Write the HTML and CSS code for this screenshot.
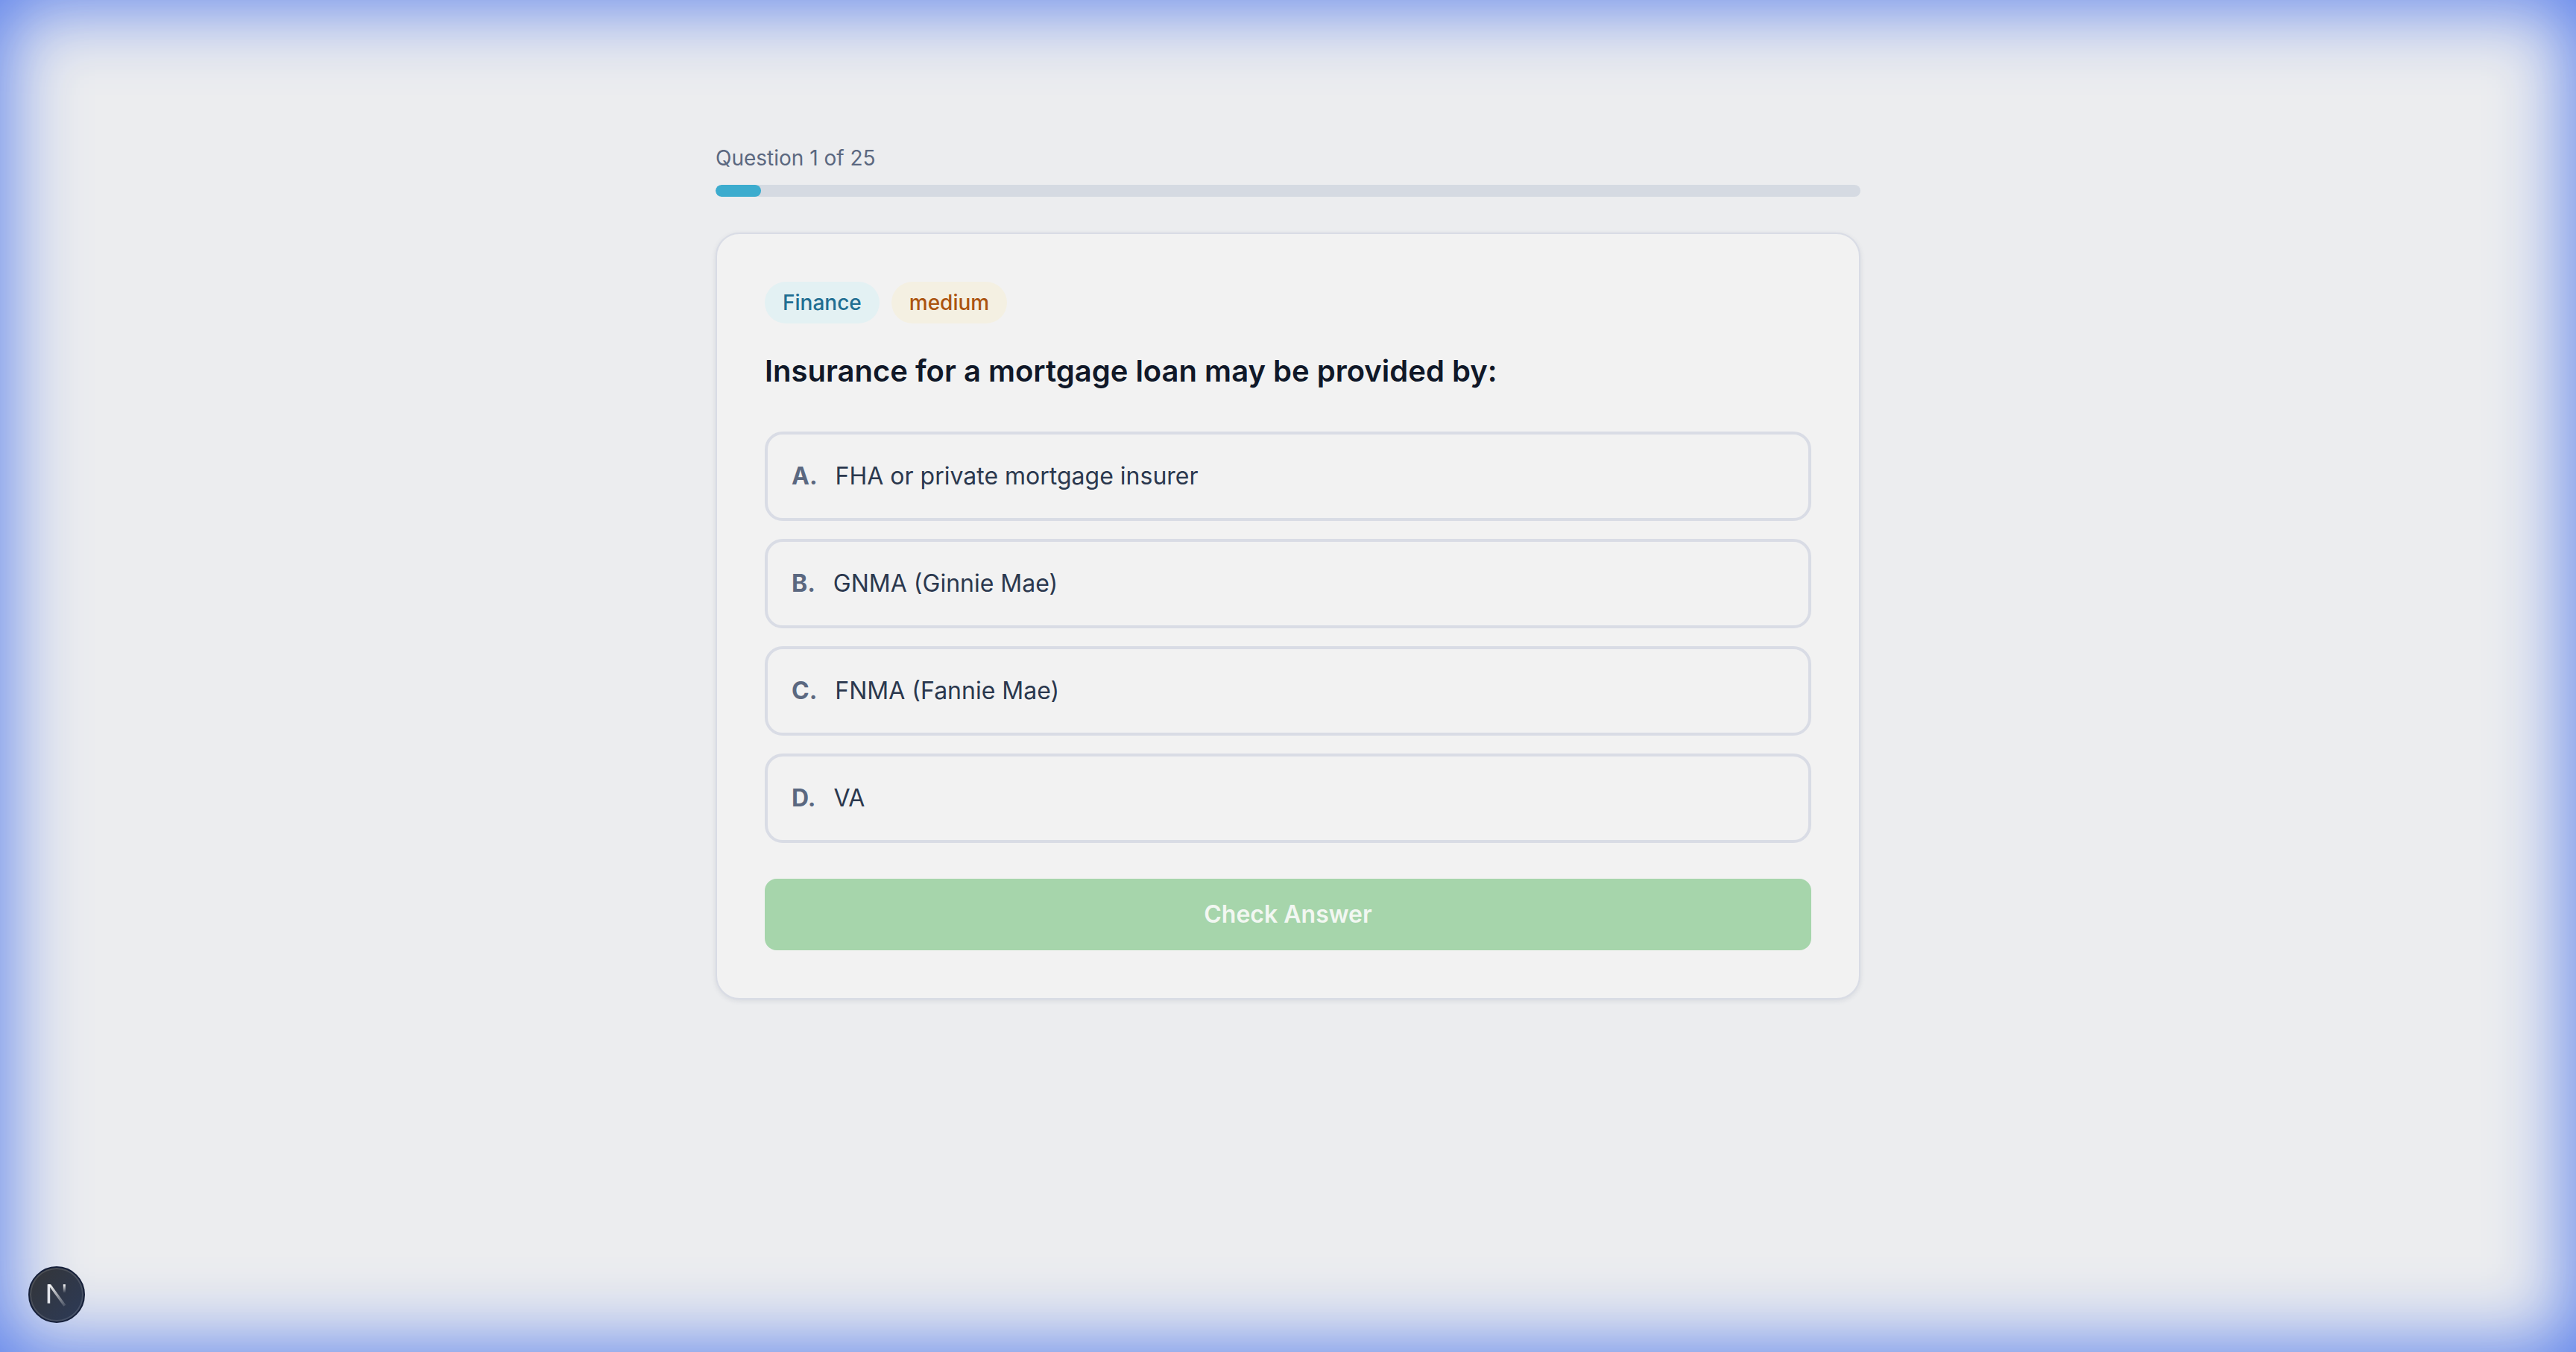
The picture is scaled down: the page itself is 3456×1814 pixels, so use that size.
FILE: index.html
```html
<!DOCTYPE html>
<html lang="en">

<head>
  <meta charset="UTF-8" />
  <title>Quiz</title>
  <link rel="stylesheet" href="styles.css">
</head>

<body>
  <main class="quiz">
    <div class="progress-label">Question 1 of 25</div>
    <div class="progress-track">
      <div class="progress-fill"></div>
    </div>

    <section class="card">
      <div class="tags">
        <span class="tag tag-category">Finance</span>
        <span class="tag tag-level">medium</span>
      </div>
      <h2 class="question">Insurance for a mortgage loan may be provided by:</h2>

      <div class="options">
        <button class="option"><span class="option-key">A.</span>FHA or private mortgage insurer</button>
        <button class="option"><span class="option-key">B.</span>GNMA (Ginnie Mae)</button>
        <button class="option"><span class="option-key">C.</span>FNMA (Fannie Mae)</button>
        <button class="option"><span class="option-key">D.</span>VA</button>
      </div>

      <button class="check" disabled>Check Answer</button>
    </section>
  </main>

  <!-- blue glow round the window -->
  <div class="glow"></div>

  <!-- dev tools badge -->
  <div class="dev-badge">
    <svg viewBox="0 0 32 32" width="44" height="44" fill="none">
      <defs>
        <linearGradient id="fade-stem" x1="0" y1="0" x2="0" y2="1">
          <stop offset="0" stop-color="#fff" />
          <stop offset="0.6" stop-color="#fff" stop-opacity="0" />
        </linearGradient>
        <linearGradient id="fade-diag" x1="0" y1="0" x2="1" y2="1">
          <stop offset="0" stop-color="#fff" />
          <stop offset="1" stop-color="#fff" stop-opacity="0.1" />
        </linearGradient>
      </defs>
      <path d="M7 6h2.6v18.5H7z" fill="#e4e6ec" />
      <path d="M7.5 6h2.8L25 26l-2.2 1.4z" fill="url(#fade-diag)" />
      <rect x="22.4" y="6" width="2.2" height="14" fill="url(#fade-stem)" />
    </svg>
  </div>
</body>

</html>
```

FILE: styles.css
```css
* {
  box-sizing: border-box;
}

body {
  margin: 0;
  min-height: 1814px;
  background: #ecedef;
  color: #1f2937;
  font-family: Inter, 'Liberation Sans', sans-serif;
  overflow: hidden;
}

.quiz {
  width: 1536px;
  margin: 0 auto;
  padding-top: 192px;
}

.progress-label {
  font-size: 28px;
  line-height: 40px;
  color: #5b6880;
  margin-bottom: 16px;
}

.progress-track {
  height: 16px;
  background: #d5dae2;
  border-radius: 8px;
  overflow: hidden;
}

.progress-fill {
  width: 4%;
  height: 100%;
  background: #3cacce;
  border-radius: 8px;
}

.card {
  margin-top: 48px;
  padding: 64px;
  background: #f2f2f2;
  border: 2px solid #d9dce5;
  border-radius: 32px;
  box-shadow: 0 2px 6px rgba(80, 90, 120, 0.14);
}

.tags {
  display: flex;
  gap: 16px;
}

.tag {
  padding: 8px 24px;
  font-size: 28px;
  line-height: 40px;
  font-weight: 500;
  border-radius: 28px;
}

.tag-category {
  background: #e3f1f3;
  color: #216e92;
}

.tag-level {
  background: #f4f0e2;
  color: #ab5410;
}

.question {
  margin: 36px 0 53px;
  font-size: 40px;
  line-height: 56px;
  font-weight: 600;
  color: #101828;
}

.options {
  display: flex;
  flex-direction: column;
  gap: 24px;
}

.option {
  display: block;
  width: 100%;
  height: 120px;
  padding: 0 32px 2px;
  background: transparent;
  border: 4px solid #d9dce5;
  border-radius: 24px;
  font-family: inherit;
  font-size: 32px;
  color: #2b384e;
  text-align: left;
}

.option-key {
  margin-right: 24px;
  font-weight: 700;
  color: #5b6880;
}

.check {
  display: block;
  width: 100%;
  height: 96px;
  margin-top: 48px;
  padding-bottom: 2px;
  background: #a6d5ab;
  border: none;
  border-radius: 16px;
  font-family: inherit;
  font-size: 32px;
  font-weight: 600;
  color: #f2f7f2;
}

.glow {
  position: fixed;
  top: 0;
  left: 0;
  width: 100%;
  height: 100%;
  pointer-events: none;
  box-shadow: inset 0 0 100px 8px rgba(80, 120, 235, 0.95);
}

.dev-badge {
  position: fixed;
  left: 38px;
  bottom: 39px;
  width: 76px;
  height: 76px;
  display: flex;
  align-items: center;
  justify-content: center;
  border-radius: 50%;
  background: linear-gradient(to bottom right, #343537, #2c3a58);
  border: 2px solid #16203a;
  box-shadow: inset 0 0 0 2px rgba(255, 255, 255, 0.12);
}
```
